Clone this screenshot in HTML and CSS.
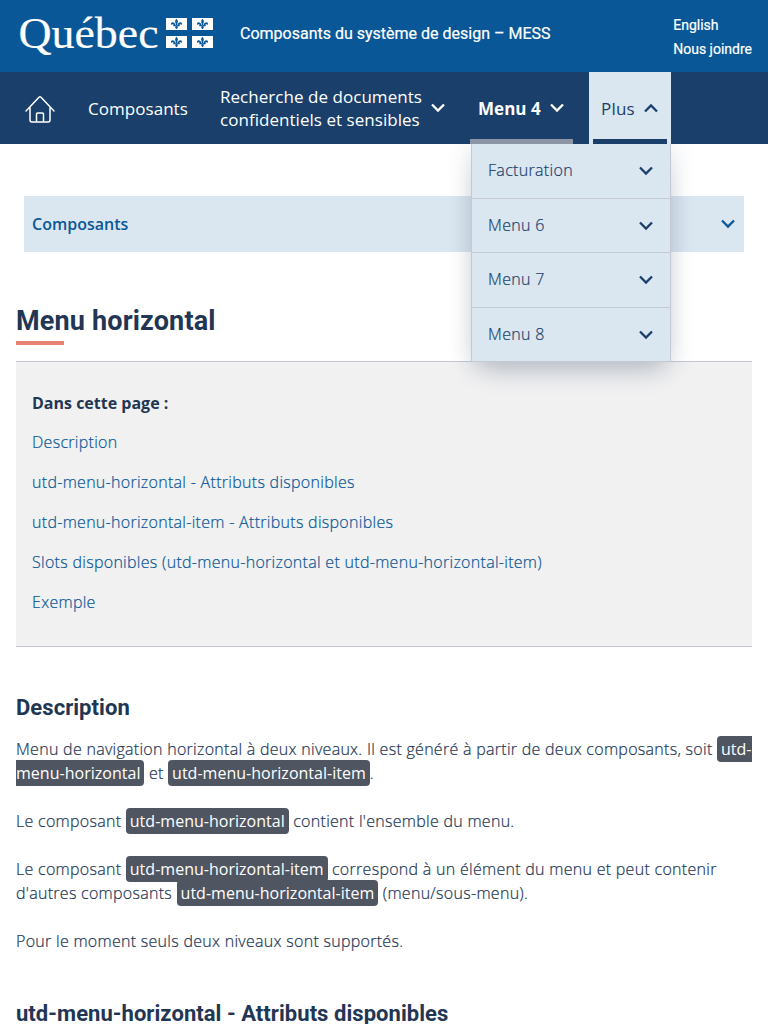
FILE: index.html
```html
<!DOCTYPE html>
<html lang="fr">
<head>
<meta charset="utf-8">
<title>Menu horizontal</title>
<link rel="stylesheet" href="styles.css">
</head>
<body>
<svg class="defs" aria-hidden="true">
  <symbol id="chevron" viewBox="0 0 14 10"><path d="M1 1.5 7 7.5 13 1.5" fill="none" stroke="currentColor" stroke-width="2.3"/></symbol>
  <symbol id="lys" viewBox="0 0 21 12">
    <path fill="#fff" d="M0 0h21v12H0z"/>
    <g fill="#095797"><path d="M10.5.7C9.3 2 8.9 3 9.3 4.3L10 7h1l.7-2.7C12.1 3 11.700 2 10.500.7z"/><path d="M6.900 4.200c-1.700-.3-2.600 1.700-1.200 2.700.2-.9 1.200-1 1.700-.3.3.5.3.9.2 1.300h2.100C9.500 6 8.600 4.400 6.900 4.200zM14.100 4.200c1.700-.3 2.600 1.700 1.200 2.700-.2-.9-1.200-1-1.700-.3-.3.5-.3.9-.2 1.300h-2.100c.2-1.900 1.100-3.500 2.800-3.700z"/><path d="M7.300 7.300h6.400v1H7.300zM9.800 8h1.400l.7 1.700-1.400 1.600-1.400-1.600z"/></g>
  </symbol>
</svg>
<header class="piv">
  <svg class="logo" width="200" height="60" viewBox="0 -12 200 60" role="img" aria-label="Québec">
    <text class="logo-text" x="0.500" y="36" textLength="140" lengthAdjust="spacingAndGlyphs">Québec</text>
    <use href="#lys" x="148" y="6" width="21" height="12"/><use href="#lys" x="174" y="6" width="21" height="12"/>
    <use href="#lys" x="148" y="24" width="21" height="12"/><use href="#lys" x="174" y="24" width="21" height="12"/>
  </svg>
  <span class="site-title">Composants du système de design – MESS</span>
  <div class="piv-links"><a>English</a><a>Nous joindre</a></div>
</header>
<nav class="menu">
  <a class="home"><svg width="32" height="30" viewBox="0 0 32 30" fill="none" stroke="currentColor" stroke-width="1.500" stroke-linecap="round" stroke-linejoin="round"><path d="M2 17 15 3.300q1-1 2 0L30 17M6 13.500V26q0 2 2 2h16q2 0 2-2V13.500M12.500 28v-8q0-1 1-1h5q1 0 1 1v8"/></svg></a>
  <a class="item composants">Composants</a>
  <a class="item recherche"><span>Recherche de documents<br>confidentiels et sensibles</span><svg class="chevron"><use href="#chevron"/></svg></a>
  <a class="item active"><span>Menu 4</span><svg class="chevron"><use href="#chevron"/></svg></a>
  <div class="plus"><a class="plus-label"><span>Plus</span><svg class="chevron up"><use href="#chevron"/></svg></a>
    <div class="dropdown">
      <a>Facturation<svg class="chevron"><use href="#chevron"/></svg></a>
      <a>Menu 6<svg class="chevron"><use href="#chevron"/></svg></a>
      <a>Menu 7<svg class="chevron"><use href="#chevron"/></svg></a>
      <a>Menu 8<svg class="chevron"><use href="#chevron"/></svg></a>
    </div>
  </div>
</nav>
<div class="side-menu"><span>Composants</span><svg class="chevron"><use href="#chevron"/></svg></div>
<main>
  <h1>Menu horizontal</h1>
  <section class="toc">
    <strong>Dans cette page :</strong>
    <a>Description</a>
    <a>utd-menu-horizontal - Attributs disponibles</a>
    <a>utd-menu-horizontal-item - Attributs disponibles</a>
    <a>Slots disponibles (utd-menu-horizontal et utd-menu-horizontal-item)</a>
    <a>Exemple</a>
  </section>
  <h2>Description</h2>
  <p>Menu de navigation horizontal à deux niveaux. Il est généré à partir de deux composants, soit <code>utd-menu-horizontal</code> et <code>utd-menu-horizontal-item</code>.</p>
  <p>Le composant <code>utd-menu-horizontal</code> contient l'ensemble du menu.</p>
  <p>Le composant <code>utd-menu-horizontal-item</code> correspond à un élément du menu et peut contenir d'autres composants <code>utd-menu-horizontal-item</code> (menu/sous-menu).</p>
  <p>Pour le moment seuls deux niveaux sont supportés.</p>
  <h2 class="next">utd-menu-horizontal - Attributs disponibles</h2>
</main>
</body>
</html>
```
FILE: styles.css
```css
* { box-sizing: border-box; }
html { overflow: hidden; }
body { margin: 0; height: 1024px; overflow: hidden; background: #fff; color: #223654; font: 300 16px/24px "Open Sans", sans-serif; }
.defs { position: absolute; width: 0; height: 0; }
.piv { display: flex; align-items: flex-start; height: 72px; padding: 0 16px 0 18px; background: #095797; color: #fff; font-family: Roboto, sans-serif; font-weight: 400; }
.logo { flex: none; overflow: visible; }
.logo-text { font: 44px "Liberation Serif", serif; fill: #fff; stroke: #fff; stroke-width: .2px; }
.site-title { margin: 22px 0 0 22px; -webkit-text-stroke: .2px; }
.piv-links { display: flex; flex-direction: column; margin: 13px 0 0 auto; font-size: 14px; -webkit-text-stroke: .2px; }
.menu { display: flex; height: 72px; background: #1a3f6b; color: #fff; font-size: 17px; line-height: 23px; font-weight: 500; letter-spacing: .04px; }
.menu a { display: flex; align-items: center; }
.home { width: 80px; padding: 2px 0 0 24px; }
.item { padding: 1px 8px 0; }
.composants { width: 132px; }
.recherche { width: 258px; padding: 0 8px 1px; }
.chevron { flex: none; width: 14px; height: 10px; }
.menu .item .chevron { margin: -2px 0 0 9px; }
.menu .recherche .chevron { margin-top: 0; }
.active { width: 103px; border-bottom: 5px solid #8d96a7; padding-top: 6px; font-weight: 700; }
.plus { position: relative; width: 82px; margin-left: 16px; background: #dae6f0; color: #1a3f6b; }
.plus-label { height: 72px; margin: 0 4px; padding: 6px 8px 0; border-bottom: 5px solid #1a3f6b; }
.plus-label span { letter-spacing: .2px; }
.plus-label .chevron { margin: -2px 0 0 9px; }
.up { transform: scaleY(-1); }
.dropdown { position: absolute; z-index: 1; top: 72px; right: 0; width: 200px; border: solid #c5cad2; border-width: 0 1px; background: #dae6f0; box-shadow: 0 16px 24px -8px rgba(34,54,84,.22), 0 0 24px rgba(34,54,84,.14); clip-path: inset(0 -50px -60px -50px); }
.dropdown a { height: 54.5px; justify-content: space-between; padding: 0 17px 0 16px; border-bottom: 1px solid #c5cad2; font-size: 16px; font-weight: 300; letter-spacing: .32px; -webkit-text-stroke: .2px; }
.dropdown a:nth-child(odd) { padding-bottom: 1px; }
.dropdown .chevron { margin-top: 1px; }
.side-menu { display: flex; align-items: center; justify-content: space-between; height: 56px; margin: 52px 24px 0; padding: 0 9px 0 8px; background: #dae6f0; color: #095797; font-weight: 600; }
main { padding: 0 16px; }
h1, h2 { margin: 0; font-family: Roboto, sans-serif; font-weight: 700; }
h1 { height: 93px; margin-bottom: 16px; padding-top: 53px; font-size: 27px; line-height: 32px; letter-spacing: .16px; }
h1::after { content: ""; display: block; width: 48px; height: 4px; margin-top: 4px; background: #e58271; }
.toc { display: flex; flex-direction: column; gap: 16px; height: 286px; padding: 29px 16px; border: solid #c5c8d6; border-width: 1px 0; background: #f1f1f2; color: #095797; }
.toc a { letter-spacing: .29px; -webkit-text-stroke: .2px; }
.toc strong { margin-bottom: -1px; color: #223654; font-weight: 700; }
h2 { margin: 45px 0 13px; font-size: 22px; line-height: 32px; letter-spacing: .05px; }
p { margin: 0 0 24px; letter-spacing: .285px; -webkit-text-stroke: .2px; }
code { padding: 2px 4px; border-radius: 4px; background: #4f5662; color: #fff; font: 400 16px/24px "Open Sans", sans-serif; letter-spacing: .02px; -webkit-text-stroke: 0; }
.next { margin-top: 45px; }
```
